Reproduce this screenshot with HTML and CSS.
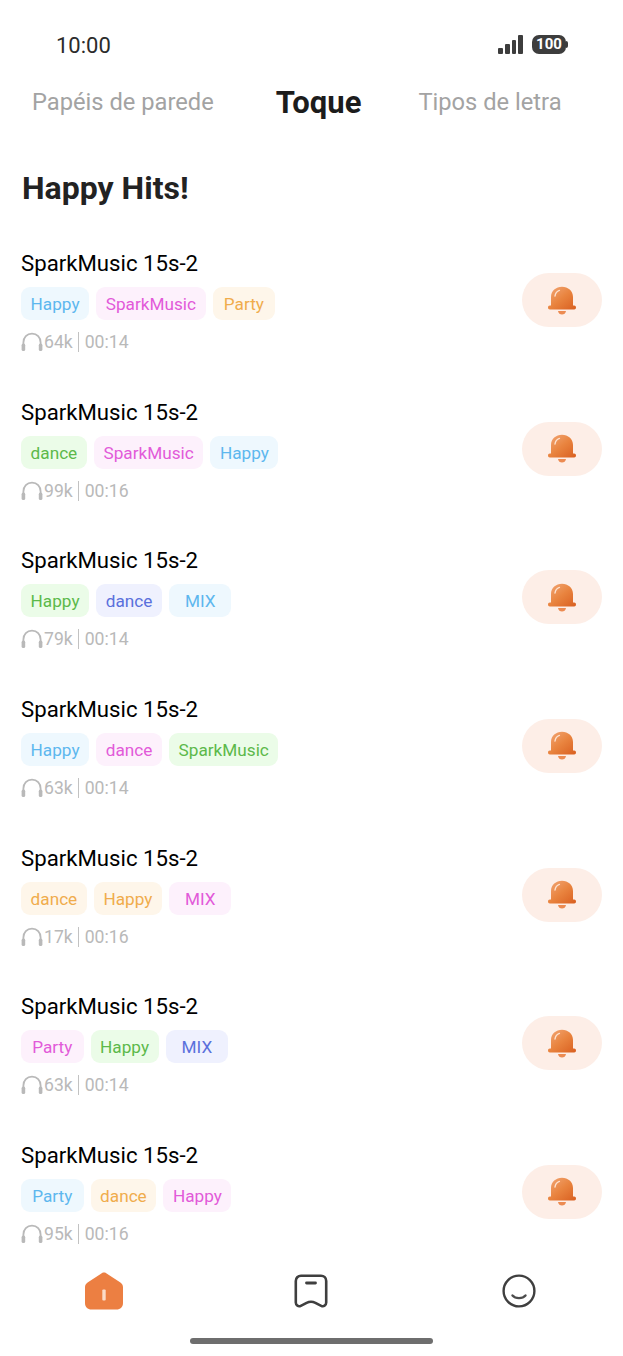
FILE: index.html
```html
<!DOCTYPE html>
<html lang="pt">

<head>
    <meta charset="UTF-8">
    <meta name="viewport" content="width=device-width, initial-scale=1.0">
    <title>Toque</title>
    <link rel="stylesheet" href="styles.css">
</head>

<body>
    <svg class="defs" width="0" height="0">
        <defs>
            <linearGradient id="bellFill" x1="0" y1="0" x2="1" y2="1">
                <stop offset="0" stop-color="#f2a878" />
                <stop offset="0.5" stop-color="#e9843f" />
                <stop offset="1" stop-color="#d95f20" />
            </linearGradient>
            <symbol id="bell" viewBox="0 0 28 29">
                <path d="M14 0.8C8 0.8 3 5 3 11V19.4H1.8C0.7 19.4 0 20.2 0 21.4C0 22.6 0.7 23.4 1.8 23.4H26.2C27.3 23.4 28 22.6 28 21.4C28 20.2 27.3 19.4 26.2 19.4H25V11C25 5 20 0.8 14 0.8Z" fill="url(#bellFill)" />
                <path d="M10 25H18C17.6 27.4 16 28.6 14 28.6C12 28.6 10.4 27.4 10 25Z" fill="#ec8b52" />
                <path d="M7 10C7.4 7.4 9 5.2 11.4 4.4" fill="none" stroke="#fde2d0" stroke-width="1.4" stroke-linecap="round" />
            </symbol>
            <symbol id="phones" viewBox="0 0 22 20">
                <path d="M2.4 14V10.5C2.4 5.3 6 1.6 11 1.6C16 1.6 19.6 5.3 19.6 10.5V14" fill="none" stroke="#b9b9b9" stroke-width="1.8" />
                <rect x="0.6" y="11.6" width="3.6" height="7.4" rx="1.6" fill="#b9b9b9" />
                <rect x="17.8" y="11.6" width="3.6" height="7.4" rx="1.6" fill="#b9b9b9" />
            </symbol>
        </defs>
    </svg>

    <div class="status-bar">
        <span class="clock">10:00</span>
        <div class="status-icons">
            <div class="signal"><i></i><i></i><i></i><i></i></div>
            <div class="battery"><span>100</span></div>
        </div>
    </div>

    <div class="tabs">
        <span class="tab">Papéis de parede</span>
        <span class="tab active">Toque</span>
        <span class="tab">Tipos de letra</span>
    </div>

    <h1 class="heading">Happy Hits!</h1>

    <div class="list">
        <div class="row">
            <div class="info">
                <div class="title">SparkMusic 15s-2</div>
                <div class="tags">
                    <span class="tag blue">Happy</span>
                    <span class="tag pink">SparkMusic</span>
                    <span class="tag orange">Party</span>
                </div>
                <div class="meta"><svg class="phones"><use href="#phones" /></svg><span>64k</span><b></b><span>00:14</span></div>
            </div>
            <div class="ring"><svg class="bell"><use href="#bell" /></svg></div>
        </div>

        <div class="row">
            <div class="info">
                <div class="title">SparkMusic 15s-2</div>
                <div class="tags">
                    <span class="tag green">dance</span>
                    <span class="tag pink">SparkMusic</span>
                    <span class="tag blue">Happy</span>
                </div>
                <div class="meta"><svg class="phones"><use href="#phones" /></svg><span>99k</span><b></b><span>00:16</span></div>
            </div>
            <div class="ring"><svg class="bell"><use href="#bell" /></svg></div>
        </div>

        <div class="row">
            <div class="info">
                <div class="title">SparkMusic 15s-2</div>
                <div class="tags">
                    <span class="tag green">Happy</span>
                    <span class="tag indigo">dance</span>
                    <span class="tag blue">MIX</span>
                </div>
                <div class="meta"><svg class="phones"><use href="#phones" /></svg><span>79k</span><b></b><span>00:14</span></div>
            </div>
            <div class="ring"><svg class="bell"><use href="#bell" /></svg></div>
        </div>

        <div class="row">
            <div class="info">
                <div class="title">SparkMusic 15s-2</div>
                <div class="tags">
                    <span class="tag blue">Happy</span>
                    <span class="tag pink">dance</span>
                    <span class="tag green">SparkMusic</span>
                </div>
                <div class="meta"><svg class="phones"><use href="#phones" /></svg><span>63k</span><b></b><span>00:14</span></div>
            </div>
            <div class="ring"><svg class="bell"><use href="#bell" /></svg></div>
        </div>

        <div class="row">
            <div class="info">
                <div class="title">SparkMusic 15s-2</div>
                <div class="tags">
                    <span class="tag orange">dance</span>
                    <span class="tag orange">Happy</span>
                    <span class="tag pink">MIX</span>
                </div>
                <div class="meta"><svg class="phones"><use href="#phones" /></svg><span>17k</span><b></b><span>00:16</span></div>
            </div>
            <div class="ring"><svg class="bell"><use href="#bell" /></svg></div>
        </div>

        <div class="row">
            <div class="info">
                <div class="title">SparkMusic 15s-2</div>
                <div class="tags">
                    <span class="tag pink">Party</span>
                    <span class="tag green">Happy</span>
                    <span class="tag indigo">MIX</span>
                </div>
                <div class="meta"><svg class="phones"><use href="#phones" /></svg><span>63k</span><b></b><span>00:14</span></div>
            </div>
            <div class="ring"><svg class="bell"><use href="#bell" /></svg></div>
        </div>

        <div class="row">
            <div class="info">
                <div class="title">SparkMusic 15s-2</div>
                <div class="tags">
                    <span class="tag blue">Party</span>
                    <span class="tag orange">dance</span>
                    <span class="tag pink">Happy</span>
                </div>
                <div class="meta"><svg class="phones"><use href="#phones" /></svg><span>95k</span><b></b><span>00:16</span></div>
            </div>
            <div class="ring"><svg class="bell"><use href="#bell" /></svg></div>
        </div>
    </div>

    <div class="nav">
        <svg class="nav-icon home" viewBox="0 0 40 40">
            <path d="M20 1.5C18.8 1.5 18 2 17 2.7L3.6 11.4C2 12.5 1 14 1 16.2V32C1 36 3.6 38.5 7.5 38.5H32.5C36.4 38.5 39 36 39 32V16.2C39 14 38 12.5 36.4 11.4L23 2.7C22 2 21.2 1.5 20 1.5Z" fill="#ec7f42" />
            <rect x="18.3" y="18.5" width="3.4" height="11" rx="1" fill="#fbdcc8" />
        </svg>
        <svg class="nav-icon" viewBox="0 0 34 34">
            <path d="M7 1.8H27C30 1.8 32.2 4 32.2 7V28.6C32.2 31.4 29.6 33 27.2 31.8L21.4 28.8C18.6 27.4 15.4 27.4 12.6 28.8L6.8 31.8C4.4 33 1.8 31.4 1.8 28.6V7C1.8 4 4 1.8 7 1.8Z" fill="none" stroke="#3f3f3f" stroke-width="2.6" />
            <path d="M12.5 9H21.5" stroke="#3f3f3f" stroke-width="2.8" stroke-linecap="round" />
        </svg>
        <svg class="nav-icon" viewBox="0 0 34 34">
            <circle cx="17" cy="17" r="15.4" fill="none" stroke="#3f3f3f" stroke-width="2.4" />
            <path d="M10.5 21.5C13.5 25 20.5 25 23.5 21.5" fill="none" stroke="#4c4c4c" stroke-width="2.4" stroke-linecap="round" />
        </svg>
    </div>

    <div class="home-bar"></div>
</body>

</html>
```

FILE: styles.css
```css
* {
    box-sizing: border-box;
}

body {
    font-family: 'Roboto', 'Liberation Sans', sans-serif;
    width: 623px;
    height: 1356px;
    margin: 0;
    background: #ffffff;
    color: #000000;
    display: flex;
    flex-direction: column;
    overflow: hidden;
}

.defs {
    position: absolute;
}

.status-bar {
    height: 46px;
    margin-top: 22px;
    padding: 0 55px 0 56px;
    display: flex;
    align-items: center;
    justify-content: space-between;
}

.clock {
    font-size: 22px;
    color: #2b2b2b;
}

.status-icons {
    display: flex;
    align-items: center;
    gap: 9px;
    margin-top: -2px;
}

.signal {
    display: flex;
    align-items: flex-end;
    gap: 2px;
    height: 19px;
}

.signal i {
    display: block;
    width: 4.75px;
    background: #3d3d3d;
    border-radius: 1px;
}

.signal i:nth-child(1) { height: 6px; }
.signal i:nth-child(2) { height: 10px; }
.signal i:nth-child(3) { height: 14px; }
.signal i:nth-child(4) { height: 19px; }

.battery {
    position: relative;
    width: 34px;
    height: 19px;
    margin-right: 2px;
    background: #3d3d3d;
    border-radius: 7px;
    color: #ffffff;
    font-size: 15px;
    font-weight: 700;
    text-align: center;
    line-height: 19px;
}

/* battery tip */
.battery::after {
    content: "";
    position: absolute;
    right: -2px;
    top: 6px;
    width: 2px;
    height: 7px;
    background: #3d3d3d;
    border-radius: 0 2px 2px 0;
}

.tabs {
    height: 68px;
    padding-left: 32px;
    display: flex;
    align-items: center;
}

.tab {
    font-size: 23.7px;
    color: #a3a3a3;
}

.tab.active {
    margin: 0 57px 0 62px;
    font-size: 31px;
    font-weight: 700;
    color: #1c1c1c;
}

.heading {
    margin: 0;
    padding: 33px 0 0 22px;
    height: 93px;
    font-size: 32px;
    font-weight: 700;
    line-height: 38px;
    color: #222222;
}

.list {
    margin-top: 20px;
    flex: 1;
    overflow: hidden;
}

.row {
    height: 148.67px;
    padding: 0 21px;
    display: flex;
    justify-content: space-between;
}

.title {
    height: 28px;
    font-size: 22.2px;
    line-height: 28px;
}

.tags {
    display: flex;
    gap: 7px;
    margin-top: 10px;
}

.tag {
    height: 33px;
    min-width: 62.5px;
    padding: 0 9.6px;
    border-radius: 9px;
    font-size: 17.2px;
    line-height: 34px;
    text-align: center;
}

.blue { background: #eef8fe; color: #5db7ee; }
.pink { background: #fdf1fc; color: #e25ad9; }
.orange { background: #fef6ea; color: #f0ac4c; }
.green { background: #ebfce8; color: #5cb94a; }
.indigo { background: #eff1fe; color: #5a70dc; }

.meta {
    display: flex;
    align-items: center;
    height: 24px;
    margin-top: 10px;
    font-size: 17.6px;
    color: #b9b9b9;
}

.phones {
    width: 22px;
    height: 20px;
    margin-right: 1px;
}

.meta b {
    width: 1.5px;
    height: 20px;
    margin: 0 5.5px 0 5px;
    background: #c2c2c2;
}

.ring {
    width: 80px;
    height: 54px;
    margin-top: 24px;
    background: #fdeee7;
    border-radius: 27px;
    display: flex;
    align-items: center;
    justify-content: center;
}

.bell {
    width: 28px;
    height: 29px;
}

.nav {
    height: 94px;
    display: grid;
    grid-template-columns: repeat(3, 1fr);
    align-items: center;
    justify-items: center;
}

.nav-icon {
    width: 34px;
    height: 34px;
}

.nav-icon.home {
    width: 40px;
    height: 40px;
}

.home-bar {
    width: 243px;
    height: 6px;
    margin: 0 auto 12px;
    background: #6e6e6e;
    border-radius: 3px;
}
```
